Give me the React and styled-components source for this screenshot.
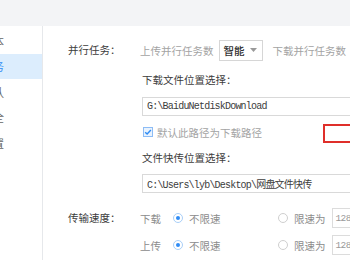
import React from "react";
import styled, { createGlobalStyle } from "styled-components";

const GlobalStyle = createGlobalStyle`
  * {
    margin: 0;
    padding: 0;
    box-sizing: border-box;
  }
  body {
    font-family: "Noto Sans CJK SC", "Noto Sans", sans-serif;
    background: #fff;
  }
`;

const Window = styled.div`
  width: 350px;
  height: 260px;
  overflow: hidden;
  display: flex;
  flex-direction: column;
  background: #fff;
`;

const TopBar = styled.div`
  height: 26px;
  flex-shrink: 0;
  background: #f3f4f6;
`;

const Body = styled.div`
  flex: 1;
  display: flex;
  min-height: 0;
`;

const Sidebar = styled.nav`
  width: 43px;
  flex-shrink: 0;
  border-right: 1px solid #e6e8eb;
  padding-top: 2px;
  overflow: hidden;
`;

const NavItem = styled.div`
  height: 25.5px;
  display: flex;
  align-items: center;
  justify-content: flex-end;
  padding-right: 38px;
  font-size: 11px;
  white-space: nowrap;
  color: ${(p) => (p.$active ? "#2f8cf5" : "#666")};
  background: ${(p) => (p.$active ? "#dcedfd" : "transparent")};
`;

const Content = styled.div`
  flex: 1;
  min-width: 0;
  padding: 13px 0 0 25px;
  display: flex;
  flex-direction: column;
  font-size: 10.5px;
`;

const Section = styled.div`
  display: grid;
  grid-template-columns: 72px 1fr;
  margin-top: ${(p) => p.$top || 0}px;
`;

const Label = styled.div`
  color: #3c3c3c;
  line-height: ${(p) => p.$h || 22}px;
  white-space: nowrap;
`;

const Line = styled.div`
  display: flex;
  align-items: center;
  height: 22px;
  white-space: nowrap;
`;

const Muted = styled.span`
  color: #a3a3a3;
  margin-left: ${(p) => p.$ml || 0}px;
`;

const Select = styled.div`
  width: 44px;
  height: 21px;
  flex-shrink: 0;
  margin-left: 5px;
  border: 1px solid #d6d6d6;
  padding: 0 5px 0 4px;
  display: flex;
  align-items: center;
  justify-content: space-between;
  color: #333;
  font-weight: 500;
`;

const PathBlock = styled.div`
  grid-column: 2;
  margin-top: 11px;
  padding-left: 2px;
  display: flex;
  flex-direction: column;
`;

const SubTitle = styled.div`
  color: #3c3c3c;
  line-height: 16px;
  margin-top: ${(p) => p.$top || 0}px;
  white-space: nowrap;
`;

const PathInput = styled.input`
  margin-top: ${(p) => p.$top || 0}px;
  width: 240px;
  height: 19px;
  border: 1px solid #d9d9d9;
  padding-left: 4px;
  font-family: "Liberation Mono", "Noto Sans CJK SC", monospace;
  font-size: 10px;
  letter-spacing: -0.8px;
  color: #3c3c3c;
  background: #fff;
  outline: none;
`;

const CheckRow = styled.div`
  margin-top: 8px;
  display: grid;
  grid-template-columns: 181px 40px;
  align-items: start;
`;

const CheckCell = styled.label`
  display: flex;
  align-items: center;
  gap: 4px;
  height: 16px;
  margin-left: 1px;
  color: #a3a3a3;
  white-space: nowrap;
`;

const CheckBox = styled.span`
  width: 10px;
  height: 10px;
  flex-shrink: 0;
  border: 1px solid #8dbcf5;
  background: #e9f3fe;
  display: flex;
  align-items: center;
  justify-content: center;
`;

const RedBox = styled.div`
  height: 19px;
  border: 2px solid #df2f2a;
  background: #fff;
`;

const SpeedRows = styled.div`
  display: flex;
  flex-direction: column;
  gap: 7px;
`;

const SpeedRow = styled.div`
  height: 20px;
  display: flex;
  align-items: center;
  white-space: nowrap;
`;

const Dir = styled.span`
  width: 33px;
  flex-shrink: 0;
  color: #8c8c8c;
`;

const Option = styled.label`
  display: flex;
  align-items: center;
  gap: 6px;
  width: ${(p) => (p.$w ? `${p.$w}px` : "auto")};
  flex-shrink: 0;
  color: #8c8c8c;
`;

const Radio = styled.span`
  width: 10px;
  height: 10px;
  border-radius: 50%;
  flex-shrink: 0;
  border: 1px solid ${(p) => (p.$on ? "#a9cff8" : "#cfcfcf")};
  display: flex;
  align-items: center;
  justify-content: center;
  &::after {
    content: "";
    width: 4px;
    height: 4px;
    border-radius: 50%;
    background: ${(p) => (p.$on ? "#2f8cf5" : "transparent")};
  }
`;

const SpeedInput = styled.div`
  width: 40px;
  height: 20px;
  margin-left: 6px;
  flex-shrink: 0;
  border: 1px solid #dcdcdc;
  padding-left: 3px;
  display: flex;
  align-items: center;
  font-family: "Liberation Mono", monospace;
  font-size: 9.5px;
  letter-spacing: -0.6px;
  color: #999;
`;

const Arrow = () => (
  <svg width="7" height="4" viewBox="0 0 7 4">
    <path d="M0 0h7L3.5 4z" fill="#999" />
  </svg>
);

const Check = () => (
  <svg width="8" height="8" viewBox="0 0 8 8">
    <path d="M1.2 4.2l1.9 1.9L6.9 2" fill="none" stroke="#2f8cf5" strokeWidth="1.4" />
  </svg>
);

const navItems = ["基本", "任务", "默认", "安全", "设置"];

const speedRows = ["下载", "上传"];

export default function App() {
  return (
    <Window>
      <GlobalStyle />
      <TopBar />
      <Body>
        <Sidebar>
          {navItems.map((t, i) => (
            <NavItem key={t} $active={i === 1}>
              {t}
            </NavItem>
          ))}
        </Sidebar>
        <Content>
          <Section>
            <Label>并行任务：</Label>
            <Line>
              <Muted>上传并行任务数</Muted>
              <Select>
                智能
                <Arrow />
              </Select>
              <Muted $ml={10}>下载并行任务数</Muted>
              <Select>
                智能
                <Arrow />
              </Select>
            </Line>
            <PathBlock>
              <SubTitle>下载文件位置选择：</SubTitle>
              <PathInput $top={9} readOnly value="G:\BaiduNetdiskDownload" />
              <CheckRow>
                <CheckCell>
                  <CheckBox>
                    <Check />
                  </CheckBox>
                  默认此路径为下载路径
                </CheckCell>
                <RedBox />
              </CheckRow>
              <SubTitle $top={7}>文件快传位置选择：</SubTitle>
              <PathInput
                $top={8}
                readOnly
                value="C:\Users\lyb\Desktop\网盘文件快传"
              />
            </PathBlock>
          </Section>
          <Section $top={15}>
            <Label $h={20}>传输速度：</Label>
            <SpeedRows>
              {speedRows.map((d) => (
                <SpeedRow key={d}>
                  <Dir>{d}</Dir>
                  <Option $w={105}>
                    <Radio $on />
                    不限速
                  </Option>
                  <Option>
                    <Radio />
                    限速为
                  </Option>
                  <SpeedInput>128</SpeedInput>
                </SpeedRow>
              ))}
            </SpeedRows>
          </Section>
        </Content>
      </Body>
    </Window>
  );
}
